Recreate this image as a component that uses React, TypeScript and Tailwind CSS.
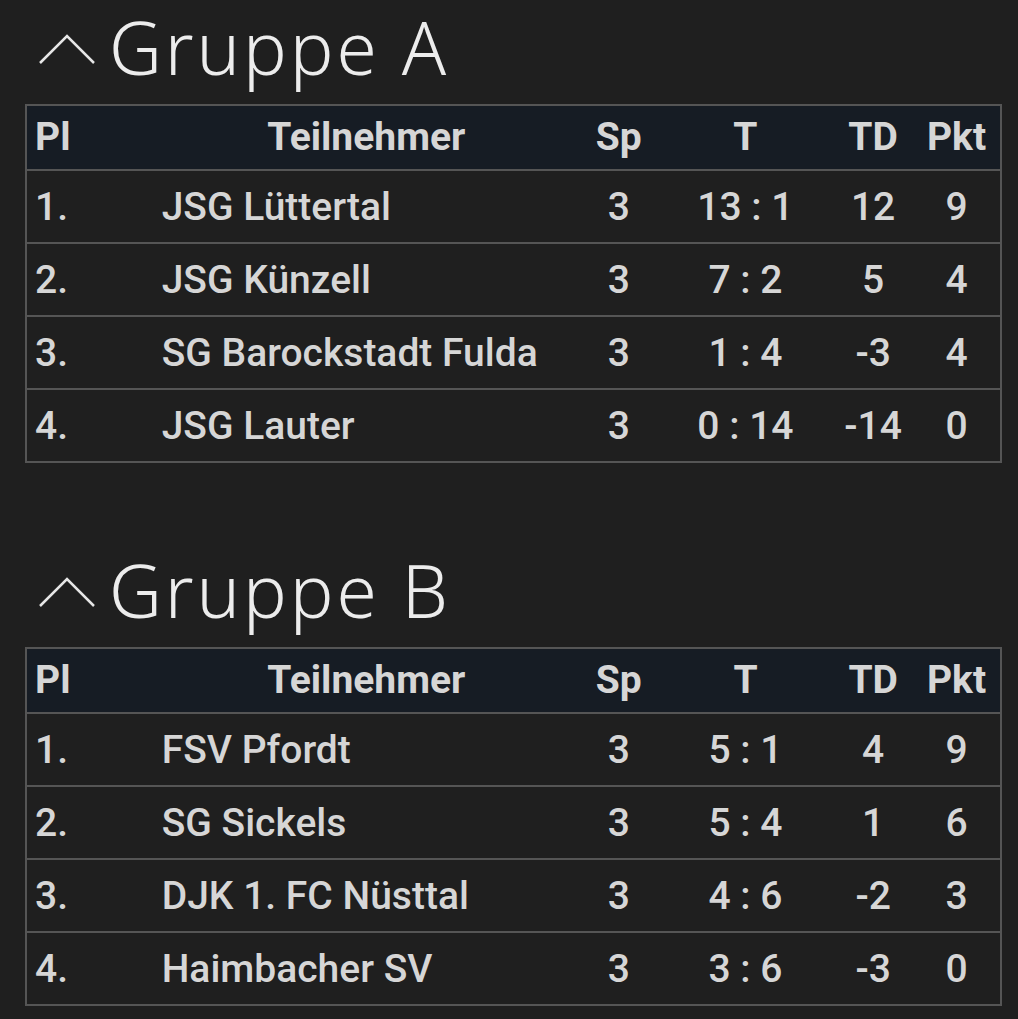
import React from "react";

type Row = { pl: string; name: string; sp: number; t: string; td: number; pkt: number };

const GROUPS: { title: string; rows: Row[] }[] = [
  {
    title: "Gruppe A",
    rows: [
      { pl: "1.", name: "JSG Lüttertal", sp: 3, t: "13 : 1", td: 12, pkt: 9 },
      { pl: "2.", name: "JSG Künzell", sp: 3, t: "7 : 2", td: 5, pkt: 4 },
      { pl: "3.", name: "SG Barockstadt Fulda", sp: 3, t: "1 : 4", td: -3, pkt: 4 },
      { pl: "4.", name: "JSG Lauter", sp: 3, t: "0 : 14", td: -14, pkt: 0 },
    ],
  },
  {
    title: "Gruppe B",
    rows: [
      { pl: "1.", name: "FSV Pfordt", sp: 3, t: "5 : 1", td: 4, pkt: 9 },
      { pl: "2.", name: "SG Sickels", sp: 3, t: "5 : 4", td: 1, pkt: 6 },
      { pl: "3.", name: "DJK 1. FC Nüsttal", sp: 3, t: "4 : 6", td: -2, pkt: 3 },
      { pl: "4.", name: "Haimbacher SV", sp: 3, t: "3 : 6", td: -3, pkt: 0 },
    ],
  },
];

function Chevron() {
  return (
    <svg width="56" height="32" viewBox="0 0 56 32" className="shrink-0">
      <polyline points="1,30 28,3 55,30" fill="none" stroke="#e6e6e6" strokeWidth="2.5" />
    </svg>
  );
}

function GroupTable({ title, rows }: { title: string; rows: Row[] }) {
  return (
    <section>
      <div className="flex items-start pl-[14px]">
        <div className="mt-[31px]">
          <Chevron />
        </div>
        <h2 className="ml-[14px] text-[73px] leading-[90px] font-light text-[#ececec] tracking-[3px] font-['Noto_Sans',sans-serif]">
          {title}
        </h2>
      </div>
      <table className="mt-[12px] w-[977px] border-collapse border-2 border-[#555] font-['Roboto',sans-serif] text-[39px] font-medium text-[#d6d6d6]">
        <colgroup>
          <col className="w-[127px]" />
          <col className="w-[428px]" />
          <col className="w-[78px]" />
          <col className="w-[176px]" />
          <col className="w-[80px]" />
          <col className="w-[88px]" />
        </colgroup>
        <thead>
          <tr className="bg-[#161c24] h-[65px] font-bold">
            <th className="text-left pl-[8px]">Pl</th>
            <th className="text-center">Teilnehmer</th>
            <th className="text-center">Sp</th>
            <th className="text-center">T</th>
            <th className="text-center">TD</th>
            <th className="text-center">Pkt</th>
          </tr>
        </thead>
        <tbody>
          {rows.map((r) => (
            <tr key={r.pl} className="h-[73px] border-t-2 border-[#555]">
              <td className="pl-[8px] pt-[2px]">{r.pl}</td>
              <td className="pl-[9px] pt-[2px]">{r.name}</td>
              <td className="text-center pt-[2px]">{r.sp}</td>
              <td className="text-center pt-[2px]">{r.t}</td>
              <td className="text-center pt-[2px]">{r.td}</td>
              <td className="text-center pt-[2px]">{r.pkt}</td>
            </tr>
          ))}
        </tbody>
      </table>
    </section>
  );
}

export default function App() {
  return (
    <div className="min-h-screen bg-[#1f1f1f] pl-[25px] pt-[2px]">
      <div className="flex flex-col gap-[82px]">
        {GROUPS.map((g) => (
          <GroupTable key={g.title} title={g.title} rows={g.rows} />
        ))}
      </div>
    </div>
  );
}
